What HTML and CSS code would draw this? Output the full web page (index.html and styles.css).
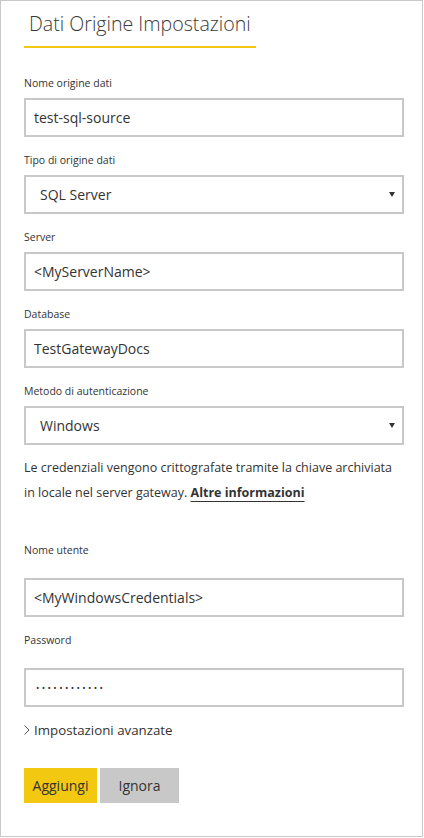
FILE: index.html
```html
<!DOCTYPE html>
<html lang="it">
<head>
<meta charset="utf-8">
<title>Dati Origine Impostazioni</title>
<link rel="stylesheet" href="styles.css">
</head>
<body>
<div class="panel">
  <div class="title">Dati Origine Impostazioni</div>
  <div class="form">
    <div class="field">
      <div class="label">Nome origine dati</div>
      <div class="input">test-sql-source</div>
    </div>
    <div class="field">
      <div class="label">Tipo di origine dati</div>
      <div class="input select"><span>SQL Server</span><svg class="arrow" width="6" height="5" viewBox="0 0 6 5"><polygon points="0,0 6,0 3,5" fill="#333"/></svg></div>
    </div>
    <div class="field">
      <div class="label">Server</div>
      <div class="input">&lt;MyServerName&gt;</div>
    </div>
    <div class="field">
      <div class="label">Database</div>
      <div class="input">TestGatewayDocs</div>
    </div>
    <div class="field">
      <div class="label">Metodo di autenticazione</div>
      <div class="input select"><span>Windows</span><svg class="arrow" width="6" height="5" viewBox="0 0 6 5"><polygon points="0,0 6,0 3,5" fill="#333"/></svg></div>
    </div>
    <div class="note">
      <div class="note-line">Le credenziali vengono crittografate tramite la chiave archiviata</div>
      <div class="note-line"><span>in locale nel server gateway.</span> <a class="more" href="#">Altre informazioni</a></div>
    </div>
    <div class="cred">
      <div class="field">
        <div class="label cred-label">Nome utente</div>
        <div class="input">&lt;MyWindowsCredentials&gt;</div>
      </div>
      <div class="field">
        <div class="label cred-label">Password</div>
        <div class="input pw"><span class="dots">••••••••••••</span></div>
      </div>
    </div>
    <div class="advanced"><svg class="chev" width="6" height="10" viewBox="0 0 6 10"><polyline points="0.5,0.5 5,5 0.5,9.5" fill="none" stroke="#555" stroke-width="1"/></svg><span>Impostazioni avanzate</span></div>
    <div class="buttons">
      <button class="btn primary">Aggiungi</button>
      <button class="btn secondary">Ignora</button>
    </div>
  </div>
</div>
</body>
</html>
```
FILE: styles.css
```css
html, body {
  margin: 0;
  padding: 0;
  background: #fff;
}
body {
  font-family: "Open Sans", "Noto Sans", "Liberation Sans", sans-serif;
  color: #333;
}
.panel {
  box-sizing: border-box;
  width: 423px;
  height: 837px;
  border: 1px solid #c8c8c8;
  padding: 9px 18px 0 23px;
}
.title {
  display: inline-block;
  font-size: 19.6px;
  font-weight: 300;
  line-height: 28px;
  padding: 0 5px 8px;
  border-bottom: 2px solid #f2c811;
  color: #3a3a3a;
}
.form {
  margin-top: 28px;
}
.field + .field {
  margin-top: 16px;
}
.label {
  font-size: 10.5px;
  line-height: 14px;
  margin-bottom: 8px;
  color: #333;
}
.input {
  box-sizing: border-box;
  height: 39px;
  border: 2px solid #c8c8c8;
  padding: 0 8px;
  display: flex;
  align-items: center;
  font-size: 14px;
  color: #333;
}
.select {
  justify-content: space-between;
  padding-left: 14px;
  padding-right: 7px;
}
.arrow {
  display: block;
}
.note {
  margin-top: 10px;
  font-size: 12.5px;
  line-height: 25px;
  color: #333;
}
.note-line {
  white-space: nowrap;
}
.more {
  color: #333;
  font-weight: 700;
  text-decoration: underline;
  text-decoration-thickness: 1px;
  text-underline-offset: 4px;
}
.cred {
  margin-top: 38px;
}
.cred-label {
  margin-bottom: 21px;
}
.cred .field + .field {
  margin-top: 16px;
}
.dots {
  font-size: 9px;
  letter-spacing: 2.4px;
  padding-left: 2px;
}
.advanced {
  margin-top: 13px;
  display: flex;
  align-items: center;
  gap: 4px;
  font-size: 13.3px;
  line-height: 20px;
  color: #333;
}
.chev {
  display: block;
}
.buttons {
  margin-top: 28px;
  display: flex;
  gap: 3px;
}
.btn {
  height: 35px;
  border: none;
  margin: 0;
  padding: 0;
  font-family: inherit;
  font-size: 14px;
  color: #333;
}
.primary {
  width: 73px;
  background: #f2c811;
}
.secondary {
  width: 79px;
  background: #c8c8c8;
}
```
